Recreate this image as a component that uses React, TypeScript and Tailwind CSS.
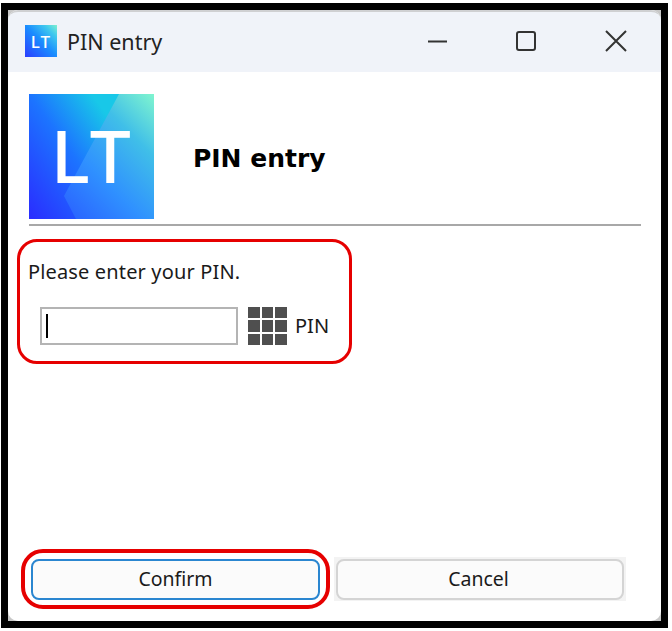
import React from "react";

function SmallLogo() {
  return (
    <div className="relative flex h-8 w-8 items-center justify-center bg-[linear-gradient(45deg,#2a3cff_0%,#1a8cff_50%,#3fc8ee_80%,#7ff0d0_100%)] font-['Noto_Sans',sans-serif] text-[17px] font-medium leading-none tracking-[1px] text-white">
      LT
    </div>
  );
}

function BigLogo() {
  return (
    <div className="relative h-[125px] w-[125px] shrink-0 overflow-hidden bg-[linear-gradient(45deg,#2848ff_0%,#2f90ff_45%,#40bfe8_75%,#80f5cf_100%)]">
      <svg className="absolute inset-0" width="125" height="125" viewBox="0 0 125 125">
        <defs>
          <linearGradient id="g1" x1="0" y1="1" x2="1" y2="0">
            <stop offset="0" stopColor="#2a2cff" />
            <stop offset="0.5" stopColor="#1c74ff" />
            <stop offset="0.85" stopColor="#18c8e8" />
          </linearGradient>
        </defs>
        <path d="M0 0H90L35 102L47 125H0Z" fill="url(#g1)" />
      </svg>
      <div className="absolute inset-0 flex items-center justify-center pb-[4px] font-['Noto_Sans',sans-serif] text-[73px] font-[550] leading-none tracking-[1.5px] text-white">
        LT
      </div>
    </div>
  );
}

function KeypadIcon() {
  return (
    <div className="grid h-[38px] w-[39px] grid-cols-3 grid-rows-3 gap-[2px]">
      {Array.from({ length: 9 }).map((_, i) => (
        <div key={i} className="bg-[#4f4f4f]" />
      ))}
    </div>
  );
}

export default function App() {
  return (
    <div className="h-[631px] w-[672px] bg-white pl-px pt-[3px]">
      <div className="h-[625px] w-[667px] border-[7px] border-black bg-[#c8c8c8]">
        <div className="flex h-full flex-col rounded-[10px] bg-white font-['Noto_Sans',sans-serif] text-[#1a1a1a]">
          <div className="flex h-[62px] shrink-0 items-center rounded-t-[10px] border-t-2 border-[#cfd0d2] bg-[#f0f3f9] pb-[2px] pl-[17px]">
            <SmallLogo />
            <span className="ml-[10px] pt-[2px] text-[21.5px] leading-none text-[#222]">PIN entry</span>
            <div className="ml-auto flex items-center">
              <svg width="24" height="24" viewBox="0 0 24 24" className="mr-[64px]">
                <path d="M2 12.5H21" stroke="#333" strokeWidth="2" />
              </svg>
              <svg width="24" height="24" viewBox="0 0 24 24" className="mr-[66px]">
                <rect x="3" y="3" width="18" height="18" rx="2" fill="none" stroke="#333" strokeWidth="2" />
              </svg>
              <svg width="24" height="24" viewBox="0 0 24 24" className="mr-[33px]">
                <path d="M2 2L22 22M22 2L2 22" stroke="#333" strokeWidth="2" />
              </svg>
            </div>
          </div>

          <div className="ml-[21px] mr-[20px] mt-[22px] flex items-center border-b-2 border-[#a8a8a8] pb-[5px]">
            <BigLogo />
            <div className="ml-[39px] pt-[4px] font-['DejaVu_Sans',sans-serif] text-[25px] font-bold leading-none text-black">
              PIN entry
            </div>
          </div>

          <div className="ml-[9px] mt-[13px] h-[125px] w-[335px] rounded-[20px] border-[3px] border-[#e60000] pl-[8px] pt-[16px]">
            <div className="text-[20px] leading-[28px] tracking-[0.15px] text-[#1a1a1a]">Please enter your PIN.</div>
            <div className="ml-[12px] mt-[21px] flex items-center">
              <div className="flex h-[38px] w-[198px] items-center border-2 border-[#b4b4b4] bg-white pl-[4px]">
                <div className="h-[24px] w-[2px] bg-black" />
              </div>
              <div className="ml-[10px]">
                <KeypadIcon />
              </div>
              <span className="ml-[8px] text-[20px] leading-none text-[#1a1a1a]">PIN</span>
            </div>
          </div>

          <div className="mb-[12px] ml-[13px] mt-auto flex items-center">
            <div className="flex h-[60px] w-[309px] items-center justify-center rounded-[22px] border-4 border-[#e60000]">
              <button className="h-[41px] w-[289px] rounded-[8px] border-2 border-[#2a86d0] bg-[#fbfbfb] text-[19.5px] leading-none text-[#1a1a1a]">
                Confirm
              </button>
            </div>
            <div className="ml-[4px] flex h-[44px] w-[292px] items-center justify-center bg-[#f3f3f3]">
              <button className="h-[41px] w-[288px] rounded-[8px] border-2 border-[#d4d4d4] bg-[#fbfbfb] pr-[3px] text-[19.5px] leading-none text-[#1a1a1a]">
                Cancel
              </button>
            </div>
          </div>
        </div>
      </div>
    </div>
  );
}
